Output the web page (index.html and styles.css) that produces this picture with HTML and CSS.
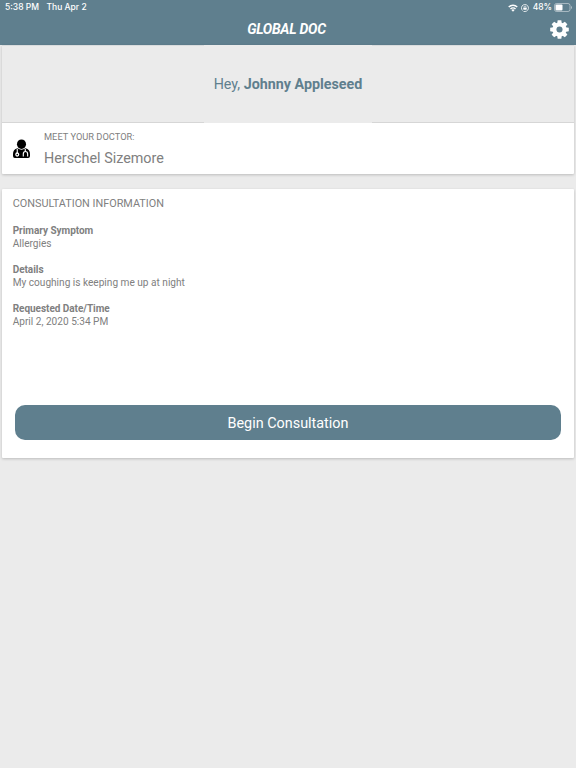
FILE: index.html
```html
<!DOCTYPE html>
<html lang="en">

<head>
    <meta charset="UTF-8">
    <meta name="viewport" content="width=device-width, initial-scale=1.0">
    <title>Global Doc</title>
    <link rel="stylesheet" href="styles.css">
</head>

<body>
    <header class="header">
        <div class="status">
            <span class="time">5:38 PM</span>
            <span>Thu Apr 2</span>
            <div class="status-right">
                <svg class="wifi" width="10" height="8" viewBox="0 0 20 16">
                    <path d="M1.5 6a12 12 0 0 1 17 0M5 9.8a7 7 0 0 1 10 0" fill="none" stroke="#fff" stroke-width="2.8"/>
                    <path d="M10 15.5L6.8 12.2a4.5 4.5 0 0 1 6.4 0z" fill="#fff"/>
                </svg>
                <svg class="lock" width="8" height="8" viewBox="0 0 16 16">
                    <path d="M3 13A7 7 0 1 1 8 15H5" fill="none" stroke="#fff" stroke-width="1.6"/>
                    <path d="M6 8V6a2 2 0 0 1 4 0v2" fill="none" stroke="#fff" stroke-width="1.3"/>
                    <rect x="4.8" y="7.3" width="6.4" height="4.4" rx="1" fill="#fff"/>
                </svg>
                <span class="percent">48%</span>
                <svg class="battery" width="18" height="9" viewBox="0 0 18 9">
                    <rect x=".5" y=".5" width="15.5" height="8" rx="2" fill="none" stroke="#fff" stroke-opacity=".45"/>
                    <rect x="1.5" y="1.5" width="7" height="6" rx="1" fill="#fff"/>
                    <path d="M17 3v3q1-.4 1-1.5t-1-1.5z" fill="#fff" fill-opacity=".5"/>
                </svg>
            </div>
        </div>
        <div class="nav">
            <h1>GLOBAL DOC</h1>
            <svg class="gear" width="19" height="19" viewBox="-10 -10 20 20">
                <g fill="#fff">
                    <path id="tooth" d="M-2.5-6L-1.9-9.8h3.8L2.5-6V6L1.9 9.8h-3.8L-2.5 6z"/>
                    <use href="#tooth" transform="rotate(45)"/>
                    <use href="#tooth" transform="rotate(90)"/>
                    <use href="#tooth" transform="rotate(135)"/>
                    <circle r="7.3"/>
                </g>
                <circle r="3.2" fill="#5f7f8e"/>
            </svg>
        </div>
    </header>

    <div class="card profile">
        <div class="hello"><span class="greeting">Hey, <b>Johnny Appleseed</b></span></div>
        <div class="doctor">
            <svg class="doctor-icon" width="17" height="20" viewBox="0 0 18 20" preserveAspectRatio="none">
                <circle cx="9" cy="5.2" r="4.8"/>
                <path d="M4.8 9.3Q9 12.2 13.2 9.3C16.5 10 18 12 18 15v2q0 2-2 2H2q-2 0-2-2v-2c0-3 1.5-5 4.8-5.7z"/>
                <g fill="none" stroke="#fff">
                    <path d="M4.5 10v4.2M13 10v2.2M10.9 17.5V15q0-2.5 2.3-2.5t2.3 2.5v2.5" stroke-width="1.2"/>
                    <circle cx="4.5" cy="15.5" r="1.5" stroke-width="1.3"/>
                </g>
            </svg>
            <div>
                <div class="label">MEET YOUR DOCTOR:</div>
                <div class="name">Herschel Sizemore</div>
            </div>
        </div>
    </div>

    <div class="card info">
        <h2>CONSULTATION INFORMATION</h2>
        <dl>
            <dt>Primary Symptom</dt>
            <dd>Allergies</dd>
            <dt>Details</dt>
            <dd>My coughing is keeping me up at night</dd>
            <dt>Requested Date/Time</dt>
            <dd>April 2, 2020 5:34 PM</dd>
        </dl>
        <button class="begin" type="button">Begin Consultation</button>
    </div>
</body>

</html>
```

FILE: styles.css
```css
body,
h1,
h2,
dl,
dd {
    margin: 0;
    padding: 0;
}

body {
    min-height: 768px;
    background: #ebebeb;
    color: #808080;
    font-family: Roboto, sans-serif;
}

svg {
    display: block;
    flex: none;
}

.header {
    box-sizing: border-box;
    height: 45px;
    background: #5f7f8e;
    color: #fff;
}

.status {
    display: flex;
    align-items: center;
    height: 15px;
    padding: 0 4px 0 5px;
    font: 500 8.5px/15px Inter, sans-serif;
    white-space: nowrap;
}

.time {
    margin-right: 7.5px;
}

.status-right {
    display: flex;
    align-items: center;
    margin-left: auto;
}

.lock {
    margin: 0 4px 0 3px;
}

.percent {
    margin-right: 2px;
}

.nav {
    display: grid;
    grid-template-columns: 1fr auto 1fr;
    align-items: center;
    height: 29px;
    padding: 0 7px;
}

.nav h1 {
    grid-column: 2;
    padding-right: 3px;
    font-size: 14px;
    letter-spacing: -.25px;
    line-height: 29px;
    font-style: italic;
    font-weight: 700;
}

.gear {
    justify-self: end;
}

.card {
    margin: 0 2px;
    border-radius: 1px;
    background: #fff;
    box-shadow: 0 1px 3px rgba(0, 0, 0, .2);
}

.profile {
    height: 129px;
}

.hello {
    box-sizing: border-box;
    display: flex;
    justify-content: center;
    height: 78px;
    border-top: 1px solid #d9dcdd;
    border-bottom: 1px solid #d6d6d6;
    background: #ebebeb;
    color: #5f7f8e;
    font-size: 14.3px;
}

/* covers the divider lines behind the name */
.greeting {
    width: 168px;
    margin: -1px 0;
    background: #ebebeb;
    line-height: 79px;
    text-align: center;
}

.doctor {
    display: flex;
    align-items: center;
    height: 51px;
    padding-left: 11px;
}

.doctor-icon {
    margin-right: 14px;
}

.label {
    font-size: 9.3px;
    line-height: 12px;
}

.name {
    margin: 7px 0 -1px;
    font-size: 14.35px;
    line-height: 18px;
}

.info {
    box-sizing: border-box;
    height: 269px;
    margin-top: 15px;
    padding: 8px 13px 18px 10.7px;
    display: flex;
    flex-direction: column;
}

.info h2 {
    margin-bottom: 13px;
    font-size: 10.85px;
    line-height: 14px;
    font-weight: 400;
}

.info dl {
    font-size: 10.1px;
    line-height: 13px;
}

.info dt {
    font-size: 10px;
    letter-spacing: -.04px;
    font-weight: 700;
}

.info dd {
    margin-bottom: 13px;
}

.begin {
    height: 35px;
    margin: auto 0 0 2.3px;
    padding: 2px 0 0;
    border: 0;
    border-radius: 10px;
    background: #5f7f8e;
    color: #fff;
    font: 14.4px Roboto, sans-serif;
}
```
